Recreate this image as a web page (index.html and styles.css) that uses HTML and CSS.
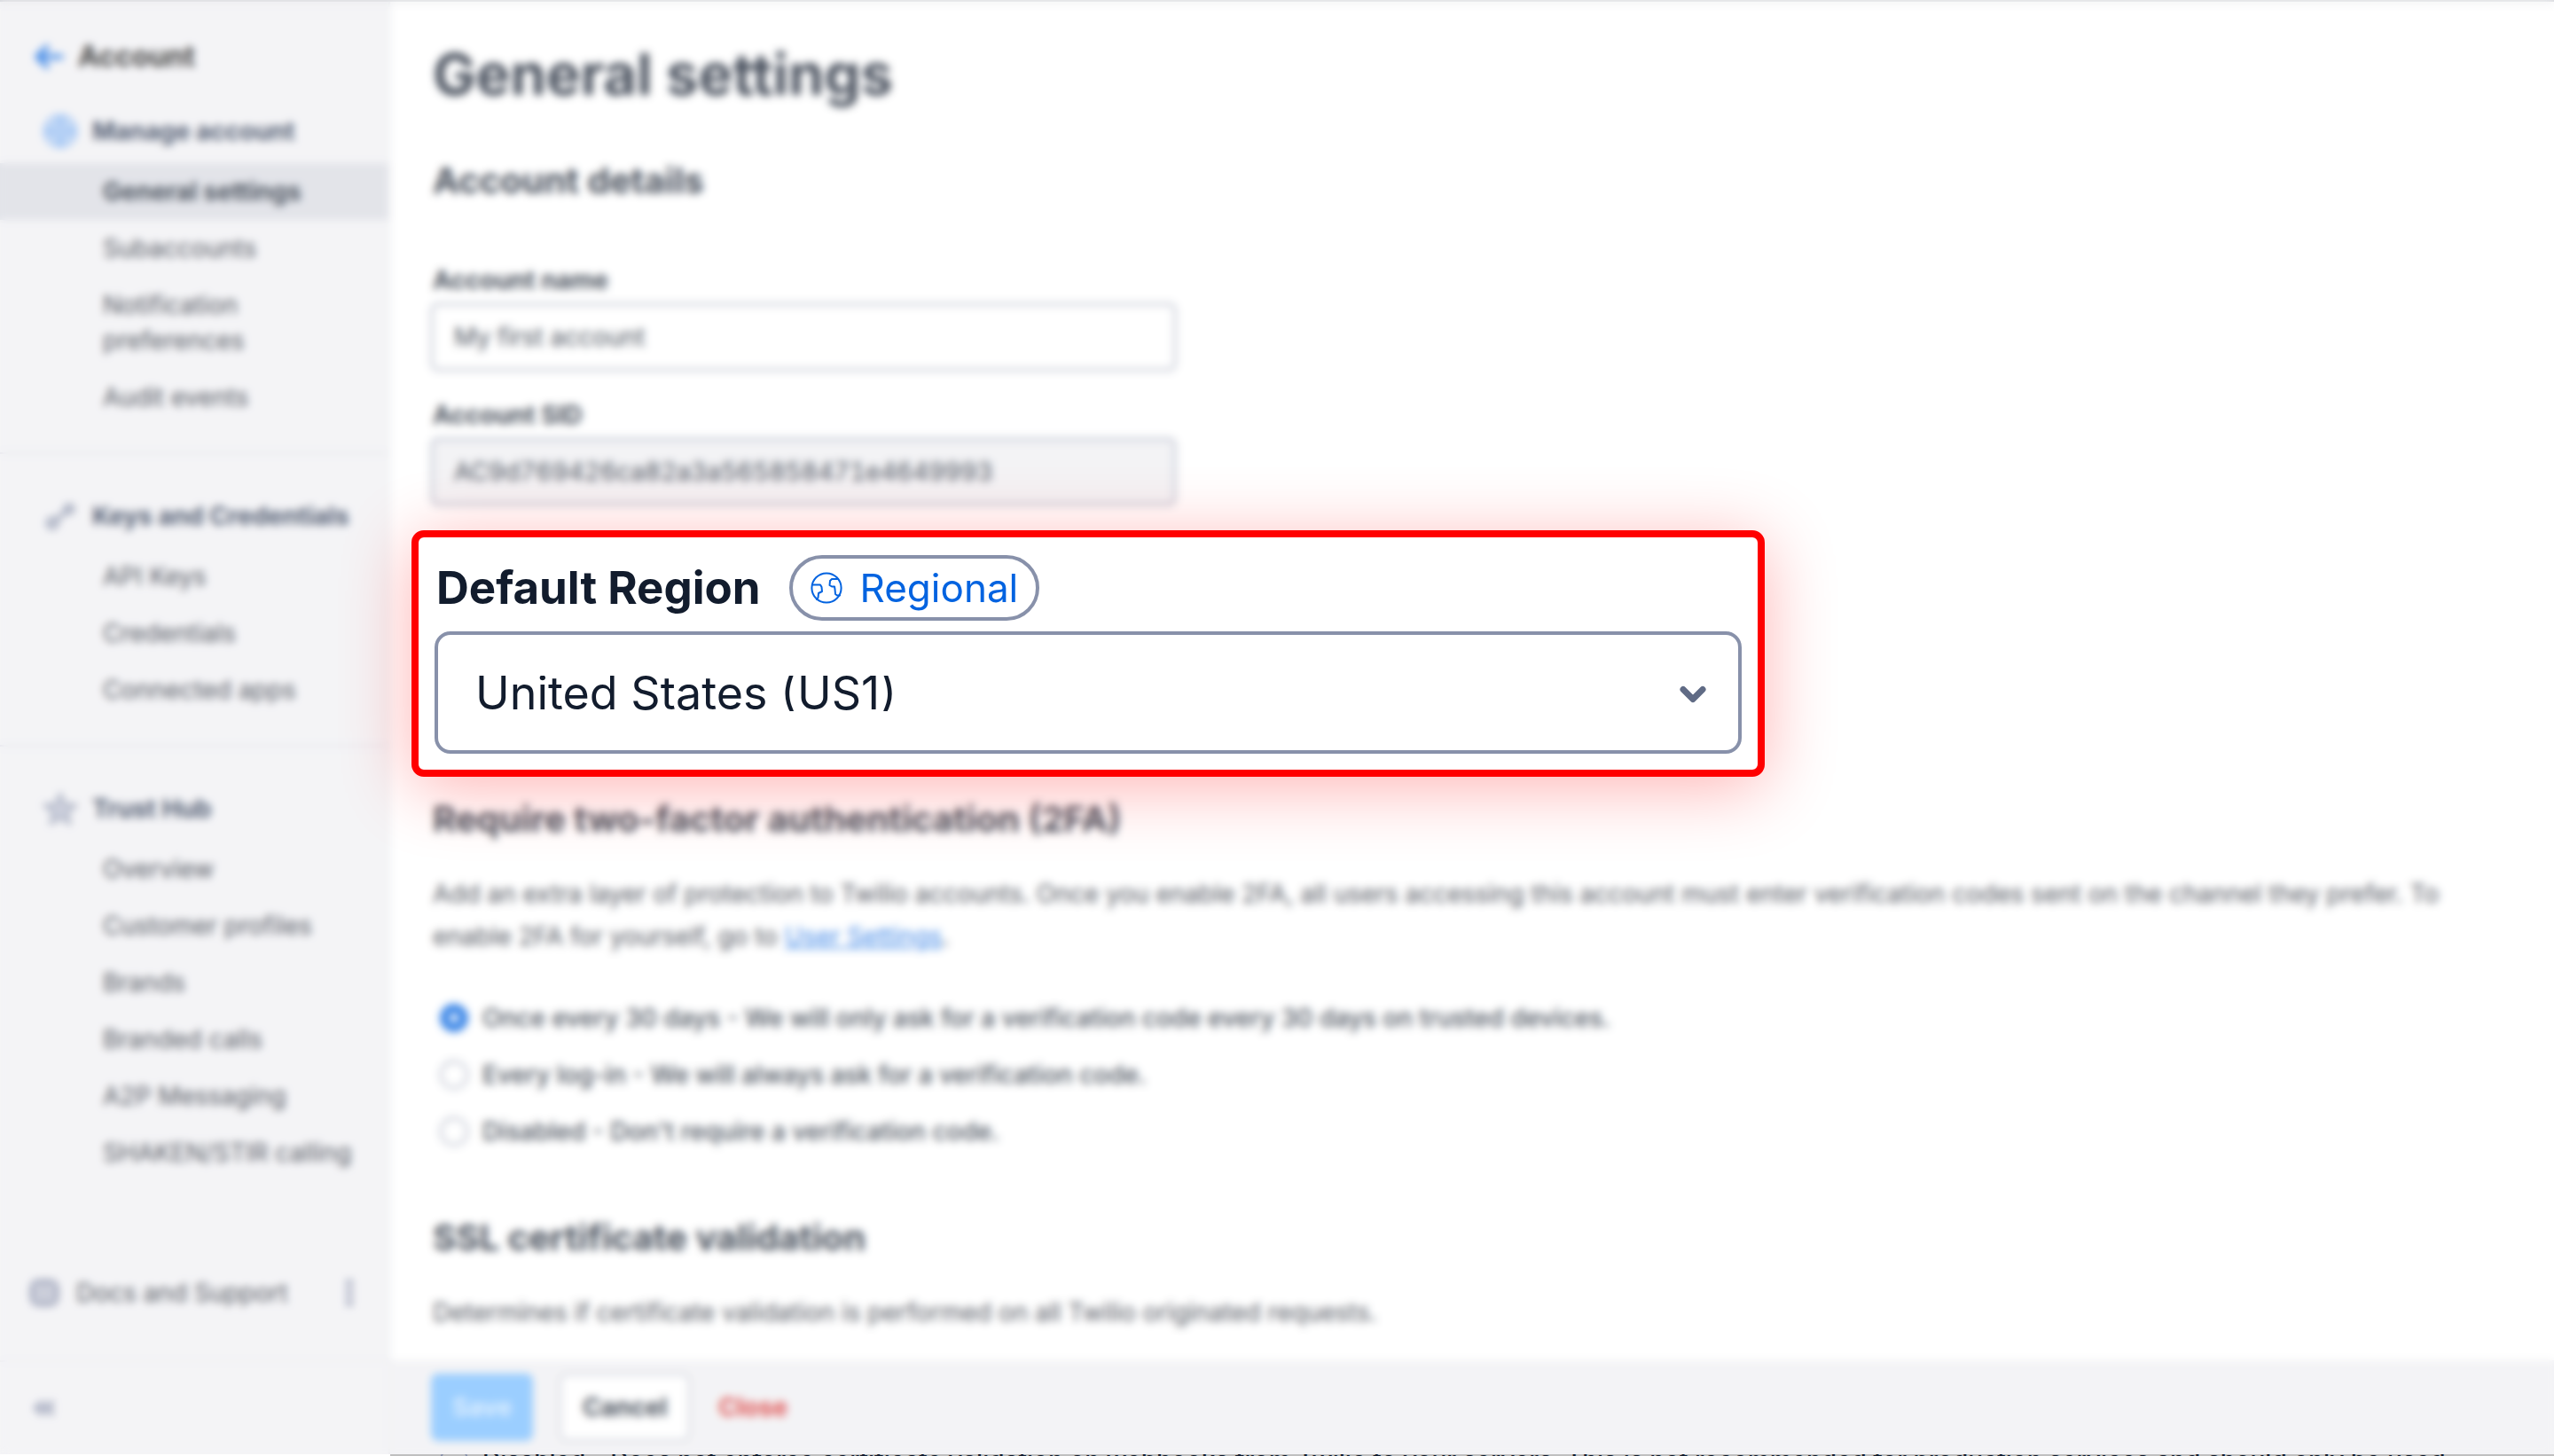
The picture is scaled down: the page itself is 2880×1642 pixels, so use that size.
FILE: index.html
```html
<!DOCTYPE html>
<html lang="en">
<head>
<meta charset="utf-8">
<title>General settings</title>
<link rel="stylesheet" href="styles.css">
</head>
<body>
<div class="app">
  <aside class="sidebar">
    <a class="back" href="#">
      <svg class="icon-back" viewBox="0 0 32 32" aria-hidden="true"><path d="M30 16H4M14 5L3 16l11 11" fill="none" stroke="currentColor" stroke-width="5" stroke-linecap="round" stroke-linejoin="round"/></svg>
      Account
    </a>
    <nav class="nav">
      <section class="group">
        <h2 class="group-title"><svg class="icon icon-blue" viewBox="0 0 40 40" aria-hidden="true"><g fill="none" stroke="currentColor" stroke-width="3"><circle cx="20" cy="20" r="17"/><circle cx="20" cy="20" r="10"/><path d="M20 3v34M3 20h34"/></g></svg>Manage account</h2>
        <a class="link active" href="#">General settings</a>
        <a class="link" href="#">Subaccounts</a>
        <a class="link" href="#">Notification preferences</a>
        <a class="link" href="#">Audit events</a>
      </section>
      <section class="group">
        <h2 class="group-title"><svg class="icon" viewBox="0 0 40 40" aria-hidden="true"><g fill="none" stroke="currentColor" stroke-width="5"><circle cx="11" cy="28" r="5"/><path d="M15 25L26 15"/><circle cx="30" cy="12" r="4"/></g></svg>Keys and Credentials</h2>
        <a class="link" href="#">API Keys</a>
        <a class="link" href="#">Credentials</a>
        <a class="link" href="#">Connected apps</a>
      </section>
      <section class="group">
        <h2 class="group-title"><svg class="icon" viewBox="0 0 40 40" aria-hidden="true"><path d="M20 3l4 12 14 1-11 8 4 13-11-8-11 8 4-13-11-8 14-1z" fill="#c4c8d8" stroke="currentColor" stroke-width="3" stroke-linejoin="round"/></svg>Trust Hub</h2>
        <a class="link" href="#">Overview</a>
        <a class="link" href="#">Customer profiles</a>
        <a class="link" href="#">Brands</a>
        <a class="link" href="#">Branded calls</a>
        <a class="link" href="#">A2P Messaging</a>
        <a class="link" href="#">SHAKEN/STIR calling</a>
      </section>
    </nav>
    <div class="docs">
      <svg class="icon-docs" viewBox="0 0 32 32" aria-hidden="true"><g fill="none" stroke="currentColor" stroke-width="6"><rect x="3" y="4" width="26" height="24" rx="6"/><path d="M16 6v20M6 16h20" stroke-width="3"/></g></svg>
      <a class="docs-link" href="#">Docs and Support</a>
      <button class="plain" type="button" aria-label="More options"><svg class="icon-more" viewBox="0 0 12 32" aria-hidden="true"><g fill="currentColor"><circle cx="6" cy="5" r="4"/><circle cx="6" cy="16" r="4"/><circle cx="6" cy="27" r="4"/></g></svg></button>
    </div>
    <div class="collapse">
      <button class="plain" type="button" aria-label="Collapse sidebar"><svg class="icon-collapse" viewBox="0 0 32 32" aria-hidden="true"><path d="M15 9l-8 7 8 7M26 9l-8 7 8 7" fill="none" stroke="currentColor" stroke-width="5"/></svg></button>
    </div>
  </aside>

  <main class="main">
    <form class="content" id="settings">
      <h1 class="title">General settings</h1>
      <h2 class="heading details">Account details</h2>
      <div class="field">
        <label class="label" for="name">Account name</label>
        <input class="input" id="name" type="text" value="My first account">
      </div>
      <div class="field">
        <label class="label" for="sid">Account SID</label>
        <input class="input readonly" id="sid" type="text" value="AC9d769426ca82a3a565858471e4649993" readonly>
      </div>

      <div class="region">
        <div class="region-head">
          <label class="region-label" for="region">Default Region</label>
          <span class="badge"><svg class="icon-globe" viewBox="0 0 36 36" aria-hidden="true"><g fill="none" stroke="currentColor" stroke-width="2" stroke-linejoin="round" stroke-linecap="round"><circle cx="18" cy="18" r="16.600"/><path d="M2 14.500h9l1.500 2.500 .5 5-4 2-.5 5-1.500 2"/><path d="M31 8h-7l-2 2-.5 5 2.500 1.500h3l.5 3 .5 5.500 2 1.500h3"/></g></svg>Regional</span>
        </div>
        <div class="select-wrap">
          <select class="select" id="region"><option>United States (US1)</option></select>
          <svg class="chevron" viewBox="0 0 30 20" aria-hidden="true"><path d="M4 4.500l11 11 11-11" fill="none" stroke="currentColor" stroke-width="7" stroke-linecap="round" stroke-linejoin="round"/></svg>
        </div>
      </div>

      <h2 class="heading twofa">Require two-factor authentication (2FA)</h2>
      <p class="text">Add an extra layer of protection to Twilio accounts. Once you enable 2FA, all users accessing this account must enter verification codes sent on the channel they prefer. To enable 2FA for yourself, go to <a class="inline-link" href="#">User Settings</a>.</p>
      <div class="radios" role="radiogroup" aria-label="Two-factor authentication">
        <label class="radio-row"><input class="radio" type="radio" name="tfa" checked>Once every 30 days - We will only ask for a verification code every 30 days on trusted devices.</label>
        <label class="radio-row"><input class="radio" type="radio" name="tfa">Every log-in - We will always ask for a verification code.</label>
        <label class="radio-row"><input class="radio" type="radio" name="tfa">Disabled - Don't require a verification code.</label>
      </div>
      <h2 class="heading ssl">SSL certificate validation</h2>
      <p class="text">Determines if certificate validation is performed on all Twilio originated requests.</p>
    </form>
    <footer class="actions">
      <button class="btn save" type="submit" form="settings">Save</button>
      <button class="btn cancel" type="button">Cancel</button>
      <button class="btn close" type="button">Close</button>
    </footer>
  </main>
  <div class="veil"></div>
</div>
<div class="peek">
  <label class="radio-row peek-row"><input class="radio" type="radio" name="ssl">Disabled - Does not enforce certificate validation on webhooks from Twilio to your servers. This is not recommended for production services and should only be used</label>
</div>
</body>
</html>
```
FILE: styles.css
```css
* { box-sizing: border-box; }

body {
  display: flex;
  flex-direction: column;
  min-height: 100vh;
  margin: 0;
  background: #fff;
  color: #121c2d;
  font: 400 28px/40px Inter, "Liberation Sans", sans-serif;
}

h1, h2, p { margin: 0; }
a { color: inherit; text-decoration: none; }
button, input, select { font: inherit; color: inherit; }
svg { flex: none; display: block; }

.app {
  position: relative;
  display: grid;
  grid-template-columns: 440px 1fr;
  flex: 1;
  border-top: 2px solid #c8cad0;
}

/* Frosted layer that dims everything except the highlighted field */
.veil {
  position: absolute;
  inset: -2px 0 0;
  z-index: 1;
  background: rgba(255, 255, 255, .24);
  backdrop-filter: blur(5px);
  pointer-events: none;
}

/* Sidebar */
.sidebar {
  display: flex;
  flex-direction: column;
  background: #f1f1f4;
  border-right: 2px solid #e6e7ec;
  color: #1c2430;
}

.back {
  display: flex;
  align-items: center;
  gap: 16px;
  padding: 42px 38px 0;
  color: #0c0c0c;
  font-size: 32px;
  font-weight: 700;
}
.icon-back { width: 34px; height: 32px; color: #0263e0; }

.nav { flex: 1; margin-top: 22px; }
.group { padding-bottom: 30px; }
.group + .group { border-top: 2px solid #d9dbe3; padding-top: 28px; }

.group-title {
  display: flex;
  align-items: center;
  gap: 16px;
  height: 78px;
  padding: 6px 0 0 48px;
  color: #1c2c48;
  font-size: 28px;
  font-weight: 700;
  white-space: nowrap;
}
.icon { width: 40px; height: 40px; color: #8891aa; }
.icon-blue { color: #5b9cf0; }

.link {
  display: block;
  padding: 12px 116px;
  padding-right: 40px;
}
.link.active { background: #dadce3; color: #121c2d; font-weight: 700; }

.docs {
  display: flex;
  align-items: center;
  padding: 0 38px 56px 34px;
}
.icon-docs { width: 32px; height: 32px; margin-right: 20px; color: #8088a5; }
.docs-link { flex: 1; }
.plain { padding: 0; border: 0; background: none; color: #8088a5; }
.icon-more { width: 12px; height: 32px; }
.collapse { display: flex; align-items: center; height: 106px; padding: 0 34px; border-top: 2px solid #e4e5ea; }
.icon-collapse { width: 32px; height: 32px; }

/* Main column */
.main { display: flex; flex-direction: column; min-width: 0; }
.content { flex: 1; padding: 42px 80px 28px 48px; }

.title { font-size: 65px; line-height: 80px; font-weight: 700; }
.heading { font-size: 40px; line-height: 56px; font-weight: 700; }
.details { margin: 52px 0 64px; }

.field { display: flex; flex-direction: column; gap: 6px; margin-bottom: 30px; }
.label { font-weight: 700; }
.input {
  width: 100%;
  max-width: 840px;
  height: 76px;
  margin-left: -2px;
  padding: 0 24px;
  border: 2px solid #8891aa;
  border-radius: 8px;
  background: #fff;
}
.readonly { background: #efeff2; font-variant-numeric: tabular-nums; }

/* Highlighted region field */
.region {
  position: relative;
  z-index: 2;
  max-width: 1526px;
  margin: -2px 0 20px -24px;
  padding: 20px 18px 18px;
  border: 8px solid #f00;
  border-radius: 14px;
  background: #fff;
  box-shadow: 0 12px 80px rgba(255, 0, 0, .3);
}
.region-head { display: flex; align-items: center; gap: 32px; margin-bottom: 12px; }
.region-label { padding-left: 2px; font-size: 51px; line-height: 64px; font-weight: 700; }
.badge {
  display: flex;
  align-items: center;
  gap: 20px;
  height: 74px;
  padding: 0 20px;
  border: 4px solid #8891aa;
  border-radius: 37px;
  color: #0263e0;
  font-size: 44px;
}
.icon-globe { width: 36px; height: 36px; }
.select-wrap { position: relative; }
.select {
  display: block;
  width: 100%;
  height: 138px;
  padding: 2px 42px 0;
  border: 4px solid #8891aa;
  border-radius: 18px;
  appearance: none;
  background: #fff;
  font-size: 52px;
}
.chevron {
  position: absolute;
  top: 61px;
  right: 40px;
  width: 30px;
  height: 20px;
  color: #606b85;
  pointer-events: none;
}

.text { line-height: 48px; color: #1c2430; }
.twofa { margin-bottom: 32px; }
.inline-link { color: #0263e0; text-decoration: underline; }

.radios { margin: 36px 0 60px; }
.radio-row {
  display: flex;
  align-items: center;
  gap: 16px;
  height: 64px;
  padding-left: 8px;
  font-weight: 500;
  white-space: nowrap;
}
.radio {
  flex: none;
  width: 32px;
  height: 32px;
  margin: 0;
  border: 2px solid #8891aa;
  border-radius: 50%;
  appearance: none;
  background: #fff;
}
.radio:checked { border: 11px solid #0263e0; }
.ssl { margin-bottom: 32px; }

.actions {
  display: flex;
  align-items: center;
  height: 106px;
  padding: 0 46px;
  background: #f0f0f3;
}
.btn {
  height: 76px;
  padding: 0 24px;
  border: 0;
  border-radius: 8px;
  font-weight: 700;
}
.save { background: #7cbfff; color: #d4eaff; }
.cancel { margin-left: 30px; border: 2px solid #b5bacb; background: #fff; }
.close { padding: 0 32px; background: none; color: #d61f1f; }

/* Next option, showing past the lower edge of the action bar */
.peek {
  height: 2px;
  margin-left: 440px;
  padding-left: 48px;
  overflow: hidden;
  background: #bfbfbf;
}
.peek-row { margin-top: -25px; }
.peek-row .radio { background: none; }
```
